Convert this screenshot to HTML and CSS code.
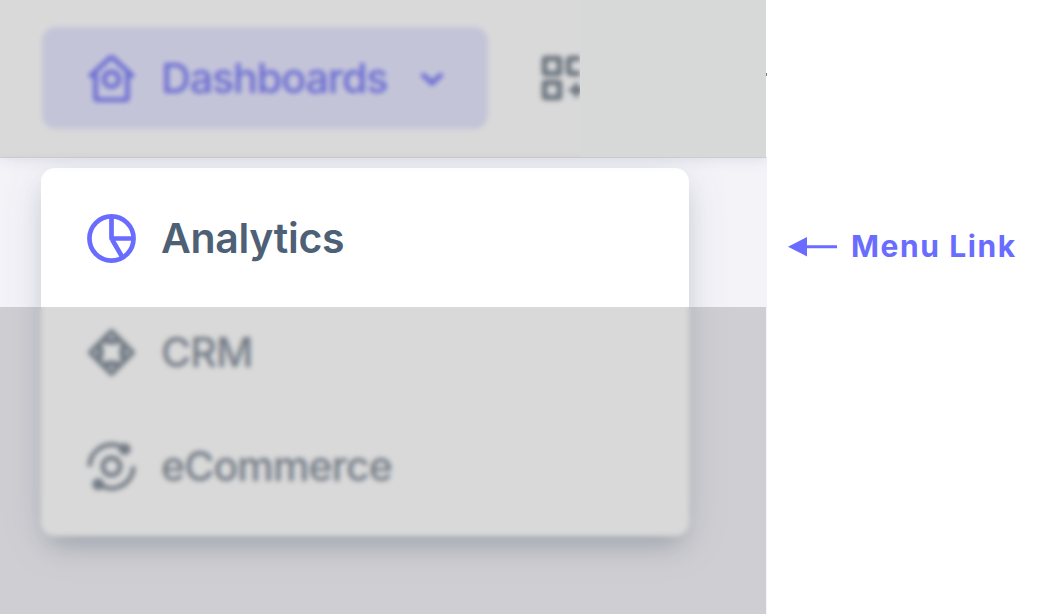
FILE: index.html
```html
<!DOCTYPE html>
<html lang="en">
<head>
<meta charset="utf-8">
<title>Menu Link</title>
<link rel="stylesheet" href="styles.css">
</head>
<body>
<main class="page">
  <section class="screen">
    <nav class="navbar">
      <a class="toggle">
        <svg class="icon" viewBox="0 0 24 24"><path d="M12 1.2 1.2 11.2M12 1.2l10.8 10M4.2 9.4v12.2a.8.8 0 0 0 .8.8h14a.8.8 0 0 0 .8-.8V9.4"/><circle cx="12" cy="12.4" r="3.7"/></svg>
        <span class="label dashboards">Dashboards</span>
        <svg class="chevron" viewBox="0 0 26 16"><path d="m3 4 10 9 10-9"/></svg>
      </a>
      <svg class="grid-icon" viewBox="0 0 48 48"><rect x="3.5" y="4.5" width="15" height="15" rx="1"/><rect x="3.5" y="28.5" width="15" height="15" rx="1"/><path d="M39 4.5H29.5a2 2 0 0 0-2 2v11a2 2 0 0 0 2 2H39"/><path class="solid" d="m35 27 3 6 6 3-6 3-3 6-3-6-6-3 6-3z"/></svg>
    </nav>
    <div class="content">
      <div class="menu">
        <a class="item active">
          <svg class="icon" viewBox="0 0 24 24"><circle cx="12" cy="12" r="10.8"/><path d="M12 1.2V12h10.8M12 12l5.4 9.3"/></svg>
          <span class="label analytics">Analytics</span>
        </a>
        <a class="item">
          <svg class="icon" viewBox="0 0 24 24"><path d="M12 1.6 1.6 12 12 22.4 22.4 12Z"/><path d="M8 4.6Q12 8 16 4.6M8 19.4q4-3.4 8 0M4.6 8q3.4 4 0 8M19.4 8q-3.4 4 0 8M7 5.6q5 3 10 0M7 18.4q5-3 10 0M5.6 7q3 5 0 10M18.4 7q-3 5 0 10"/></svg>
          <span class="label crm">CRM</span>
        </a>
        <a class="item">
          <svg class="icon" viewBox="0 0 24 24"><circle cx="12" cy="12" r="4.2"/><path d="M1.3 12A10.7 10.7 0 0 1 17.6 2.9M22.7 12A10.7 10.7 0 0 1 6.4 21.1"/><circle class="solid" cx="18.5" cy="3.5" r="2.9"/><circle class="solid" cx="5.5" cy="20.7" r="2.9"/></svg>
          <span class="label ecommerce">eCommerce</span>
        </a>
      </div>
    </div>
    <div class="veil veil-top"></div>
    <div class="cover"></div>
    <div class="veil veil-bottom"></div>
    <i class="speck"></i>
  </section>
  <aside class="note">
    <svg class="arrow" viewBox="0 0 49 20"><path d="M0 9.7 19 0v19.4ZM18 8.3h31v3H18Z"/></svg>
    <span class="note-text">Menu Link</span>
  </aside>
</main>
</body>
</html>
```
FILE: styles.css
```css
* { box-sizing: border-box; }
body { margin: 0; background: #fff; overflow: hidden; font-family: Inter, "Liberation Sans", sans-serif; }
.page { display: flex; width: 1058px; height: 614px; }
.screen { position: relative; display: flex; flex-direction: column; flex: none; width: 767px; height: 614px; overflow: hidden; background: #f4f3f8; }
.navbar { position: relative; z-index: 1; display: flex; align-items: center; gap: 53px; flex: none; height: 157px; padding: 0 0 1px 42px; background: #fff; box-shadow: 0 1px 14px rgba(67, 89, 113, .16); }
.toggle { display: flex; align-items: center; width: 446px; height: 102px; padding-left: 45px; border-radius: 14px; background: #e7e7ff; color: #7c7ef8; }
.icon { flex: none; width: 49px; height: 49px; fill: none; stroke: currentColor; stroke-width: 2.3; stroke-linejoin: round; overflow: visible; }
.solid { fill: currentColor; stroke: none; }
.label { margin-left: 26px; font-size: 41px; font-weight: 500; line-height: 50px; white-space: nowrap; }
.dashboards { width: 228px; margin-left: 25px; letter-spacing: -.95px; }
.chevron { width: 26px; height: 16px; margin-left: 30px; fill: none; stroke: currentColor; stroke-width: 5; }
.grid-icon { width: 48px; height: 48px; fill: none; stroke: #7e8995; color: #7e8995; stroke-width: 5.5; }
.content { flex: 1; padding: 11px 0 0 41px; }
.menu { display: flex; flex-direction: column; width: 648px; height: 368px; padding: 13px 0; border-radius: 14px; background: #fff; box-shadow: 0 15px 24px -9px rgba(67, 89, 113, .28), 0 8px 44px rgba(67, 89, 113, .14); }
.item { display: flex; align-items: center; height: 114px; padding-left: 46px; color: #87919d; }
.active .icon { color: #696cff; }
.item .label { margin-left: 25px; }
.active .label { color: #4d6075; font-weight: 600; letter-spacing: -.3px; }
.crm { letter-spacing: -.8px; }
.ecommerce { letter-spacing: -.85px; }
.veil { position: absolute; z-index: 2; left: 0; width: 766px; background: rgba(0, 0, 0, .15); backdrop-filter: blur(2.4px); }
.veil-top { top: 0; height: 157.5px; }
.veil-bottom { top: 307px; height: 307px; }
.cover { position: absolute; z-index: 3; left: 580px; top: 0; width: 186px; height: 157px; background: #d7d9d8; }
.speck { position: absolute; z-index: 4; right: 0; top: 73px; width: 1px; height: 3px; background: #76818d; }
.screen::after { content: ""; position: absolute; z-index: 3; right: 0; top: 0; width: 1px; height: 156px; background: #fff; }
.note { display: flex; align-items: center; height: 493px; padding-left: 21px; color: #696cff; }
.arrow { width: 49px; height: 20px; fill: currentColor; }
.note-text { margin-left: 14px; font-size: 30px; font-weight: 700; line-height: 36px; letter-spacing: 1.6px; transform: translateY(-1px); white-space: nowrap; }
```
